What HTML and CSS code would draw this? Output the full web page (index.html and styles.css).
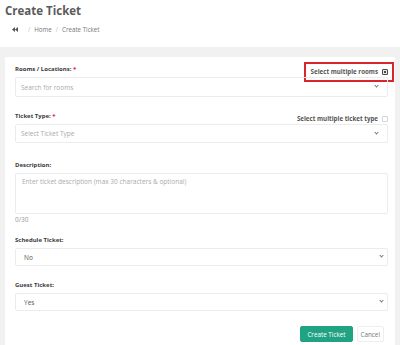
FILE: index.html
```html
<!DOCTYPE html>
<html lang="en">
<head>
  <meta charset="UTF-8">
  <meta name="viewport" content="width=device-width, initial-scale=1.0">
  <title>Create Ticket</title>
  <link rel="stylesheet" href="styles.css">
</head>
<body>
  <div class="page-header">
    <h1 class="page-title">Create Ticket</h1>
    <div class="breadcrumb">
      <svg class="back-icon" viewBox="0 0 10 8" width="6" height="5">
        <path d="M5 0 L0 4 L5 8 Z M10 0 L5 4 L10 8 Z" fill="#555"/>
      </svg>
      <span class="sep first">/</span>
      <span>Home</span>
      <span class="sep">/</span>
      <span>Create Ticket</span>
    </div>
  </div>

  <div class="content">
    <div class="card">
      <div class="field">
        <div class="field-head">
          <label class="label">Rooms / Locations: <span class="req">*</span></label>
          <div class="multi highlight">Select multiple rooms <span class="check checked"></span></div>
        </div>
        <div class="select search tall">Search for rooms <span class="caret"></span></div>
      </div>

      <div class="field">
        <div class="field-head">
          <label class="label">Ticket Type: <span class="req">*</span></label>
          <div class="multi">Select multiple ticket type <span class="check"></span></div>
        </div>
        <div class="select search">Select Ticket Type <span class="caret"></span></div>
      </div>

      <div class="field description">
        <div class="field-head">
          <label class="label">Description:</label>
        </div>
        <div class="textarea">Enter ticket description (max 30 characters &amp; optional)</div>
        <div class="counter">0/30</div>
      </div>

      <div class="field">
        <div class="field-head">
          <label class="label">Schedule Ticket:</label>
        </div>
        <div class="select native">No <span class="caret"></span></div>
      </div>

      <div class="field">
        <div class="field-head">
          <label class="label">Guest Ticket:</label>
        </div>
        <div class="select native">Yes <span class="caret"></span></div>
      </div>

      <div class="actions">
        <button class="btn btn-primary">Create Ticket</button>
        <button class="btn btn-cancel">Cancel</button>
      </div>
    </div>
  </div>
</body>
</html>
```

FILE: styles.css
```css
body {
  margin: 0;
  font-family: 'Open Sans', 'Liberation Sans', sans-serif;
  background-color: #f1f1f1;
  color: #444;
}
.page-header {
  background: white;
  padding: 2px 5px 0;
  height: 45px;
}
.page-title {
  margin: 0;
  font-size: 11.5px;
  font-weight: 700;
  color: #5b5b5b;
  line-height: 18px;
}
.breadcrumb {
  display: flex;
  align-items: center;
  gap: 4px;
  margin: 5px 0 0 7px;
  font-size: 6.2px;
  color: #777;
}
.breadcrumb .sep {
  color: #bbb;
}
.breadcrumb .sep.first {
  margin-left: 6px;
}
.content {
  padding: 10px 5px 0;
}
.card {
  background: white;
  border-radius: 2px;
  padding: 8px 7px 4px 10px;
  height: 300px;
}
.field {
  margin-bottom: 15px;
}
.field.description {
  margin-top: 18px;
}
.field-head {
  position: relative;
  display: flex;
  justify-content: space-between;
  align-items: flex-start;
  height: 12px;
}
.label {
  display: block;
  font-size: 6px;
  line-height: 9px;
  font-weight: 700;
  color: #3a3a3a;
}
.req {
  color: #e02020;
}
.multi {
  position: relative;
  display: flex;
  align-items: center;
  gap: 4px;
  margin-top: 2px;
  font-size: 6.2px;
  line-height: 9px;
  font-weight: 700;
  color: #555;
}
.multi.highlight::after {
  content: "";
  position: absolute;
  left: -7px;
  right: -6px;
  top: -5px;
  bottom: -6px;
  border: 2px solid #d9262c;
}
.check {
  box-sizing: border-box;
  width: 6px;
  height: 6px;
  border: 1px solid #d4d4d4;
  border-radius: 1px;
  background: white;
}
.check.checked {
  background: #4a4a4a;
  border-color: #4a4a4a;
  box-shadow: inset 0 0 0 1px #e6e6e6;
}
.select {
  position: relative;
  box-sizing: border-box;
  height: 19px;
  border: 1px solid #ececec;
  border-radius: 2px;
  display: flex;
  align-items: center;
  font-size: 6.5px;
}
.select.tall {
  height: 20px;
}
.select.search {
  color: #aaa;
  padding-left: 5px;
}
.select.native {
  height: 18px;
  color: #555;
  padding-left: 8px;
}
.caret {
  position: absolute;
  top: 50%;
  width: 2px;
  height: 2px;
  margin-top: -3px;
  border-right: 1px solid #777;
  border-bottom: 1px solid #777;
  transform: rotate(45deg);
}
.search .caret {
  right: 9px;
}
.native .caret {
  right: 4px;
}
.textarea {
  box-sizing: border-box;
  height: 41px;
  border: 1px solid #ececec;
  border-radius: 2px;
  padding: 3px 6px;
  font-size: 6.5px;
  color: #aaa;
}
.counter {
  font-size: 6.5px;
  line-height: 9px;
  color: #999;
  margin-top: 1px;
  margin-bottom: -3px;
}
.actions {
  display: flex;
  justify-content: flex-end;
  gap: 4px;
  margin-top: 0;
  padding-right: 4px;
}
.btn {
  font-family: inherit;
  font-size: 6.3px;
  height: 16px;
  border-radius: 2px;
  padding: 0 6px;
  cursor: pointer;
}
.btn-primary {
  background: #20a382;
  border: 1px solid #20a382;
  color: white;
}
.btn-cancel {
  padding: 0 3px;
  background: white;
  border: 1px solid #eee;
  color: #777;
}
```
